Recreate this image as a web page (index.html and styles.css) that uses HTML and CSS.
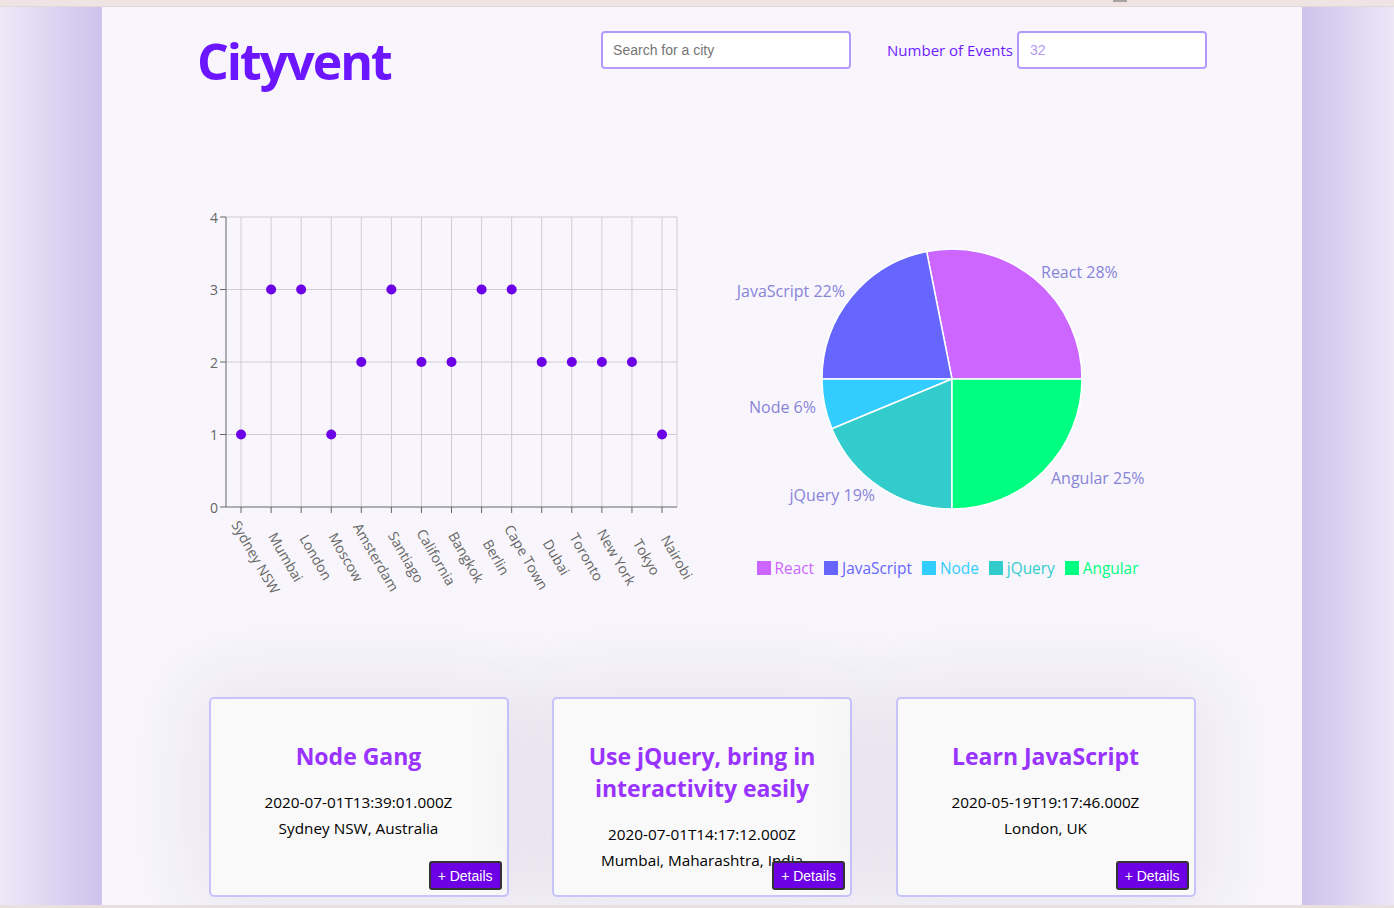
FILE: index.html
```html
<!DOCTYPE html>
<html lang="en">
<head>
<meta charset="utf-8">
<title>Cityvent</title>
<link rel="stylesheet" href="styles.css">
</head>
<body>
<div class="topbar"><span class="topbar-thumb"></span></div>
<div class="stage">
  <main class="app">
    <header class="header">
      <h1 class="brand">Cityvent</h1>
      <div class="controls">
        <input class="search" type="text" placeholder="Search for a city">
        <label class="num-label">Number of Events</label>
        <input class="num-input" type="number" value="32">
      </div>
    </header>

    <section class="charts">
      <svg class="scatter" width="510" height="400" viewBox="0 0 510 400">
        <g class="grid">
          <line x1="36" y1="17" x2="487" y2="17"/>
          <line x1="36" y1="89.5" x2="487" y2="89.5"/>
          <line x1="36" y1="162" x2="487" y2="162"/>
          <line x1="36" y1="234.5" x2="487" y2="234.5"/>
          <line x1="51.03" y1="17" x2="51.03" y2="307"/>
          <line x1="81.10" y1="17" x2="81.10" y2="307"/>
          <line x1="111.17" y1="17" x2="111.17" y2="307"/>
          <line x1="141.24" y1="17" x2="141.24" y2="307"/>
          <line x1="171.31" y1="17" x2="171.31" y2="307"/>
          <line x1="201.38" y1="17" x2="201.38" y2="307"/>
          <line x1="231.45" y1="17" x2="231.45" y2="307"/>
          <line x1="261.52" y1="17" x2="261.52" y2="307"/>
          <line x1="291.59" y1="17" x2="291.59" y2="307"/>
          <line x1="321.66" y1="17" x2="321.66" y2="307"/>
          <line x1="351.73" y1="17" x2="351.73" y2="307"/>
          <line x1="381.80" y1="17" x2="381.80" y2="307"/>
          <line x1="411.87" y1="17" x2="411.87" y2="307"/>
          <line x1="441.94" y1="17" x2="441.94" y2="307"/>
          <line x1="472.01" y1="17" x2="472.01" y2="307"/>
          <line x1="487" y1="17" x2="487" y2="307"/>
        </g>
        <g class="axis">
          <line x1="36" y1="17" x2="36" y2="307"/>
          <line x1="36" y1="307" x2="487" y2="307"/>
          <line x1="30" y1="17" x2="36" y2="17"/>
          <line x1="30" y1="89.5" x2="36" y2="89.5"/>
          <line x1="30" y1="162" x2="36" y2="162"/>
          <line x1="30" y1="234.5" x2="36" y2="234.5"/>
          <line x1="30" y1="307" x2="36" y2="307"/>
          <line x1="51.03" y1="307" x2="51.03" y2="313"/>
          <line x1="81.10" y1="307" x2="81.10" y2="313"/>
          <line x1="111.17" y1="307" x2="111.17" y2="313"/>
          <line x1="141.24" y1="307" x2="141.24" y2="313"/>
          <line x1="171.31" y1="307" x2="171.31" y2="313"/>
          <line x1="201.38" y1="307" x2="201.38" y2="313"/>
          <line x1="231.45" y1="307" x2="231.45" y2="313"/>
          <line x1="261.52" y1="307" x2="261.52" y2="313"/>
          <line x1="291.59" y1="307" x2="291.59" y2="313"/>
          <line x1="321.66" y1="307" x2="321.66" y2="313"/>
          <line x1="351.73" y1="307" x2="351.73" y2="313"/>
          <line x1="381.80" y1="307" x2="381.80" y2="313"/>
          <line x1="411.87" y1="307" x2="411.87" y2="313"/>
          <line x1="441.94" y1="307" x2="441.94" y2="313"/>
          <line x1="472.01" y1="307" x2="472.01" y2="313"/>
        </g>
        <g class="ylabels">
          <text x="28" y="17">4</text>
          <text x="28" y="89.5">3</text>
          <text x="28" y="162">2</text>
          <text x="28" y="234.5">1</text>
          <text x="28" y="307">0</text>
        </g>
        <g class="xlabels">
          <text x="66.03" y="357" transform="rotate(60 66.03 357)">Sydney NSW</text>
          <text x="96.10" y="357" transform="rotate(60 96.10 357)">Mumbai</text>
          <text x="126.17" y="357" transform="rotate(60 126.17 357)">London</text>
          <text x="156.24" y="357" transform="rotate(60 156.24 357)">Moscow</text>
          <text x="186.31" y="357" transform="rotate(60 186.31 357)">Amsterdam</text>
          <text x="216.38" y="357" transform="rotate(60 216.38 357)">Santiago</text>
          <text x="246.45" y="357" transform="rotate(60 246.45 357)">California</text>
          <text x="276.52" y="357" transform="rotate(60 276.52 357)">Bangkok</text>
          <text x="306.59" y="357" transform="rotate(60 306.59 357)">Berlin</text>
          <text x="336.66" y="357" transform="rotate(60 336.66 357)">Cape Town</text>
          <text x="366.73" y="357" transform="rotate(60 366.73 357)">Dubai</text>
          <text x="396.80" y="357" transform="rotate(60 396.80 357)">Toronto</text>
          <text x="426.87" y="357" transform="rotate(60 426.87 357)">New York</text>
          <text x="456.94" y="357" transform="rotate(60 456.94 357)">Tokyo</text>
          <text x="487.01" y="357" transform="rotate(60 487.01 357)">Nairobi</text>
        </g>
        <g class="dots">
          <circle cx="51.03" cy="234.5" r="5"/>
          <circle cx="81.10" cy="89.5" r="5"/>
          <circle cx="111.17" cy="89.5" r="5"/>
          <circle cx="141.24" cy="234.5" r="5"/>
          <circle cx="171.31" cy="162" r="5"/>
          <circle cx="201.38" cy="89.5" r="5"/>
          <circle cx="231.45" cy="162" r="5"/>
          <circle cx="261.52" cy="162" r="5"/>
          <circle cx="291.59" cy="89.5" r="5"/>
          <circle cx="321.66" cy="89.5" r="5"/>
          <circle cx="351.73" cy="162" r="5"/>
          <circle cx="381.80" cy="162" r="5"/>
          <circle cx="411.87" cy="162" r="5"/>
          <circle cx="441.94" cy="162" r="5"/>
          <circle cx="472.01" cy="234.5" r="5"/>
        </g>
      </svg>

      <div class="pie-wrap">
        <svg class="pie" width="500" height="350" viewBox="0 0 500 350">
          <g class="slices">
            <path class="s-react" d="M252 179 L382 179 A130 130 0 0 0 226.64 51.5 Z"/>
            <path class="s-js" d="M252 179 L226.64 51.5 A130 130 0 0 0 122 179 Z"/>
            <path class="s-node" d="M252 179 L122 179 A130 130 0 0 0 131.9 228.75 Z"/>
            <path class="s-jquery" d="M252 179 L131.9 228.75 A130 130 0 0 0 252 309 Z"/>
            <path class="s-angular" d="M252 179 L252 309 A130 130 0 0 0 382 179 Z"/>
          </g>
          <g class="pie-labels">
            <text x="341" y="78">React 28%</text>
            <text class="end" x="145" y="97">JavaScript 22%</text>
            <text class="end" x="116" y="213">Node 6%</text>
            <text class="end" x="175" y="301">jQuery 19%</text>
            <text x="351" y="284">Angular 25%</text>
          </g>
        </svg>
        <ul class="legend">
          <li class="lg-react"><span class="swatch"></span>React</li>
          <li class="lg-js"><span class="swatch"></span>JavaScript</li>
          <li class="lg-node"><span class="swatch"></span>Node</li>
          <li class="lg-jquery"><span class="swatch"></span>jQuery</li>
          <li class="lg-angular"><span class="swatch"></span>Angular</li>
        </ul>
      </div>
    </section>

    <section class="events">
      <article class="card">
        <h2 class="card-title">Node Gang</h2>
        <p class="card-line">2020-07-01T13:39:01.000Z</p>
        <p class="card-line">Sydney NSW, Australia</p>
        <button class="details">+ Details</button>
      </article>
      <article class="card">
        <h2 class="card-title">Use jQuery, bring in interactivity easily</h2>
        <p class="card-line">2020-07-01T14:17:12.000Z</p>
        <p class="card-line">Mumbai, Maharashtra, India</p>
        <button class="details">+ Details</button>
      </article>
      <article class="card">
        <h2 class="card-title">Learn JavaScript</h2>
        <p class="card-line">2020-05-19T19:17:46.000Z</p>
        <p class="card-line">London, UK</p>
        <button class="details">+ Details</button>
      </article>
    </section>
  </main>
</div>
<div class="bottombar"></div>
</body>
</html>
```

FILE: styles.css
```css
* { box-sizing: border-box; }

html, body {
  margin: 0;
  padding: 0;
}

body {
  height: 908px;
  overflow: hidden;
  display: flex;
  flex-direction: column;
  font-family: "Open Sans", "Noto Sans", sans-serif;
  background: #efe4e4;
}

.topbar {
  height: 7px;
  flex: none;
  background: #efe3e3;
  border-bottom: 1px solid #e3d7d7;
  display: flex;
}

.topbar-thumb {
  margin-left: 1113px;
  width: 14px;
  height: 2px;
  background: #a8a2a2;
}

.stage {
  flex: 1;
  min-height: 0;
  display: flex;
  background: linear-gradient(90deg, #ede9f8 0px, #cdc3ec 102px, #cdc3ec 1302px, #ebe7f7 1394px);
}

.app {
  width: 1200px;
  margin-left: 102px;
  background: #f8f6fc;
  overflow: hidden;
}

.bottombar {
  height: 3px;
  flex: none;
  background: #eadede;
}

/* header */
.header {
  display: flex;
  justify-content: space-between;
  align-items: flex-start;
  padding: 24px 95px 0 95px;
}

.brand {
  margin: 5px 0 0 0;
  font-family: "Open Sans", sans-serif;
  font-weight: 700;
  font-size: 50px;
  line-height: 50px;
  letter-spacing: -2px;
  color: #6b16ff;
}

.controls {
  display: flex;
  align-items: center;
}

.search,
.num-input {
  height: 38px;
  border: 2px solid #b39bfb;
  border-radius: 4px;
  background: #ffffff;
  font-family: "Liberation Sans", Arial, sans-serif;
  font-size: 14px;
  outline: none;
}

.search {
  width: 250px;
  padding: 0 10px;
  margin-right: 36px;
  color: #333;
}

.search::placeholder {
  color: #757575;
}

.num-label {
  font-size: 15px;
  color: #6c1cff;
  margin-right: 4px;
}

.num-input {
  width: 190px;
  padding: 0 11px;
  color: #b49cef;
  -moz-appearance: textfield;
}

.num-input::-webkit-outer-spin-button,
.num-input::-webkit-inner-spin-button {
  -webkit-appearance: none;
  margin: 0;
}

/* charts */
.charts {
  display: flex;
  align-items: flex-start;
  margin-top: 114px;
  padding-left: 88px;
  height: 400px;
}

.scatter {
  display: block;
  flex: none;
}

.grid line {
  stroke: #cfcbd6;
  stroke-width: 1;
}

.axis line {
  stroke: #666666;
  stroke-width: 1;
}

.ylabels text {
  font-size: 14px;
  fill: #666666;
  text-anchor: end;
  dominant-baseline: central;
}

.xlabels text {
  font-size: 14px;
  fill: #666666;
  text-anchor: middle;
  dominant-baseline: central;
}

.dots circle {
  fill: #6c00e6;
}

.pie-wrap {
  width: 500px;
  flex: none;
}

.pie {
  display: block;
}

.slices path {
  stroke: #ffffff;
  stroke-width: 1.5;
}

.s-react { fill: #cc66ff; }
.s-js { fill: #6666ff; }
.s-node { fill: #33ccff; }
.s-jquery { fill: #33cccc; }
.s-angular { fill: #00ff80; }

.pie-labels text {
  font-size: 16px;
  fill: #8884d8;
}

.pie-labels text.end {
  text-anchor: end;
}

.legend {
  list-style: none;
  margin: 0;
  padding: 0 0 0 5px;
  height: 36px;
  display: flex;
  justify-content: center;
  align-items: center;
  font-size: 15.4px;
}

.legend li {
  display: flex;
  align-items: center;
  margin-right: 10px;
}

.swatch {
  width: 14px;
  height: 14px;
  margin-right: 4px;
}

.lg-react { color: #cc66ff; }
.lg-react .swatch { background: #cc66ff; }
.lg-js { color: #6666ff; }
.lg-js .swatch { background: #6666ff; }
.lg-node { color: #33ccff; }
.lg-node .swatch { background: #33ccff; }
.lg-jquery { color: #33cccc; }
.lg-jquery .swatch { background: #33cccc; }
.lg-angular { color: #00ff80; }
.lg-angular .swatch { background: #00ff80; }

/* events */
.events {
  display: flex;
  justify-content: center;
  gap: 43.5px;
  margin-top: 97px;
}

.card {
  position: relative;
  width: 300px;
  height: 200px;
  padding: 20px 10px;
  border: 2px solid #c7c3fb;
  border-radius: 5px;
  background: #f9f9f9;
  text-align: center;
  box-shadow: 0 0 80px 20px rgba(40, 20, 80, 0.07);
}

.card-title {
  margin: 21px 0 17px 0;
  font-size: 23px;
  line-height: 32px;
  font-weight: 700;
  color: #9933ff;
}

.card-line {
  margin: 0;
  font-size: 15.3px;
  line-height: 26px;
  color: #000000;
}

.details {
  position: absolute;
  right: 5px;
  bottom: 5px;
  height: 29px;
  padding: 0 7px;
  border: 2px solid #333333;
  border-radius: 3px;
  background: #6e00e6;
  color: #ffffff;
  font-family: "Liberation Sans", Arial, sans-serif;
  font-size: 14px;
  cursor: pointer;
}
```
